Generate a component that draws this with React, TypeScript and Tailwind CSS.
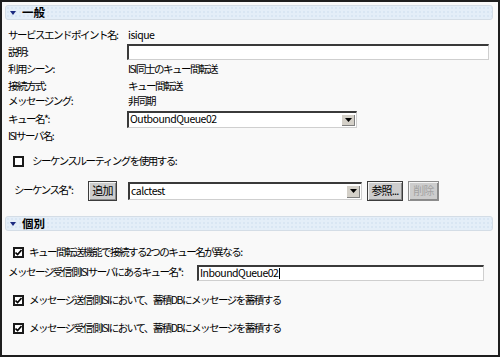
import React from 'react';

const txt = "text-[10.5px] tracking-[-1.5px] text-black leading-none whitespace-nowrap";
const fieldTxt = "text-[10.5px] tracking-[-0.5px] text-black leading-none whitespace-nowrap";
const inset = "bg-white border-t-2 border-l-2 border-b border-r border-t-[#3a3a3a] border-l-[#3a3a3a] border-b-[#cfcfcf] border-r-[#cfcfcf]";

function SectionHeader({ title, className }: { title: string; className: string }) {
  return (
    <div className={`ml-[3px] mr-[5px] h-[15px] flex items-center rounded-[3px] border border-[#d4dde6] bg-[#e4eef8] bg-[radial-gradient(#d9e6f3_1px,transparent_1.3px)] bg-[length:4px_4px] ${className}`}>
      <svg width="6" height="4" viewBox="0 0 6 4" className="ml-[4px]">
        <path d="M0 0h6L3 4z" fill="#1b2a80" />
      </svg>
      <span className="ml-[6px] text-[11.5px] font-bold leading-none text-black">{title}</span>
    </div>
  );
}

function Checkbox({ checked }: { checked?: boolean }) {
  return (
    <div className="w-[11px] h-[11px] flex-none border-2 border-[#1a1a1a] bg-white flex items-center justify-center">
      {checked && (
        <svg width="7" height="7" viewBox="0 0 7 7">
          <path d="M0.5 3.5 L2.6 5.6 L6.5 1" stroke="#000" strokeWidth="1.6" fill="none" />
        </svg>
      )}
    </div>
  );
}

function Select({ value, className }: { value: string; className: string }) {
  return (
    <div className={`${inset} flex items-stretch ${className}`}>
      <div className={`flex-1 flex items-center pl-[1px] ${fieldTxt}`}>{value}</div>
      <div className="w-[14px] my-[1px] mr-[1px] bg-[#d4d0c8] shadow-[inset_1px_1px_0_#ffffff,inset_-1px_-1px_0_#808080] flex items-center justify-center">
        <svg width="7" height="4" viewBox="0 0 7 4">
          <path d="M0 0h7L3.5 4z" fill="#000" />
        </svg>
      </div>
    </div>
  );
}

function Button({ label, className, disabled }: { label: string; className: string; disabled?: boolean }) {
  return (
    <div
      className={`h-[20px] flex-none flex items-center justify-center border bg-[#cdcdcd] shadow-[inset_1px_1px_0_#f4f4f4,inset_-1px_-1px_0_#8a8a8a] text-[11px] tracking-[-0.8px] leading-none ${
        disabled ? 'border-[#8c8c8c] text-[#a3a3a3]' : 'border-[#3c3c3c] text-black'
      } ${className}`}
    >
      {label}
    </div>
  );
}

function InfoRow({ label, h, children }: { label: string; h: string; children?: React.ReactNode }) {
  return (
    <div className={`flex items-center pl-[6px] ${h}`}>
      <div className={`w-[119px] flex-none ${txt}`}>{label}</div>
      {children}
    </div>
  );
}

export default function App() {
  return (
    <div className="w-[500px] h-[357px] border-2 border-[#1e1e1e] bg-[#f9f9f9] font-['Noto_Sans_CJK_JP',sans-serif] flex flex-col overflow-hidden">
      <SectionHeader title="一般" className="mt-[3px]" />

      <div className="mt-[7px] flex flex-col">
        <InfoRow label="サービスエンドポイント名:" h="h-[16px]">
          <span className={`pl-[1px] ${fieldTxt}`}>isique</span>
        </InfoRow>
        <InfoRow label="説明:" h="h-[18px]">
          <div className={`${inset} w-[362px] h-[16px]`} />
        </InfoRow>
        <InfoRow label="利用シーン:" h="h-[17px]">
          <span className={`pl-[1px] ${txt}`}>ISI同士のキュー間転送</span>
        </InfoRow>
        <InfoRow label="接続方式:" h="h-[16px]">
          <span className={`pl-[1px] ${txt}`}>キュー間転送</span>
        </InfoRow>
        <InfoRow label="メッセージング:" h="h-[15px]">
          <span className={`pl-[1px] ${txt}`}>非同期</span>
        </InfoRow>
        <InfoRow label="キュー名*:" h="h-[20px]">
          <Select value="OutboundQueue02" className="w-[230px] h-[17px]" />
        </InfoRow>
        <InfoRow label="ISIサーバ名:" h="h-[15px]" />
      </div>

      <div className="mt-[7px] h-[20px] flex items-center pl-[11px] gap-[8px]">
        <Checkbox />
        <span className={txt}>シーケンスルーティングを使用する:</span>
      </div>

      <div className="mt-[9px] h-[21px] flex items-center pl-[12px]">
        <div className={`w-[74px] flex-none ${txt}`}>シーケンス名*:</div>
        <Button label="追加" className="w-[29px]" />
        <Select value="calctest" className="ml-[11px] w-[234px] h-[18px]" />
        <Button label="参照..." className="ml-[5px] w-[36px]" />
        <Button label="削除" className="ml-[5px] w-[31px]" disabled />
      </div>

      <SectionHeader title="個別" className="mt-[15px]" />

      <div className="mt-[13px] h-[17px] flex items-center pl-[11px] gap-[5px]">
        <Checkbox checked />
        <span className={txt}>キュー間転送機能で接続する2つのキュー名が異なる:</span>
      </div>

      <div className="mt-[2px] h-[19px] flex items-center pl-[6px]">
        <div className={`w-[189px] flex-none ${txt}`}>メッセージ受信側ISIサーバにあるキュー名*:</div>
        <div className={`${inset} w-[287px] h-[16px] flex items-center pl-[1px]`}>
          <span className={fieldTxt}>InboundQueue02</span>
          <span className="w-[1px] h-[11px] bg-black ml-[1px]" />
        </div>
      </div>

      <div className="mt-[9px] h-[18px] flex items-center pl-[11px] gap-[5px]">
        <Checkbox checked />
        <span className={txt}>メッセージ送信側ISIにおいて、蓄積DBにメッセージを蓄積する</span>
      </div>

      <div className="mt-[10px] h-[18px] flex items-center pl-[11px] gap-[5px]">
        <Checkbox checked />
        <span className={txt}>メッセージ受信側ISIにおいて、蓄積DBにメッセージを蓄積する</span>
      </div>
    </div>
  );
}
